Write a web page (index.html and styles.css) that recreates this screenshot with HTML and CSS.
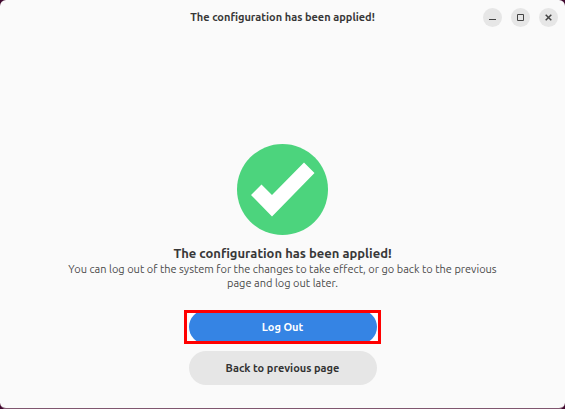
FILE: index.html
```html
<!DOCTYPE html>
<html lang="en">
<head>
    <meta charset="UTF-8">
    <meta name="viewport" content="width=device-width, initial-scale=1.0">
    <title>The configuration has been applied!</title>
    <link rel="stylesheet" href="styles.css">
</head>
<body>
    <div class="window">
        <header class="titlebar">
            <span class="title">The configuration has been applied!</span>
            <div class="controls">
                <button class="control" type="button" aria-label="Minimize">
                    <svg width="19" height="19" viewBox="0 0 19 19"><path d="M6 11.5h7" /></svg>
                </button>
                <button class="control" type="button" aria-label="Maximize">
                    <svg width="19" height="19" viewBox="0 0 19 19"><path d="M6.5 6.5h6v6h-6z" /></svg>
                </button>
                <button class="control" type="button" aria-label="Close">
                    <svg width="19" height="19" viewBox="0 0 19 19"><path class="cross" d="M6.7 6.7l5.6 5.6M12.3 6.7l-5.6 5.6" /></svg>
                </button>
            </div>
        </header>

        <main class="status">
            <svg class="check" viewBox="0 0 91 91" aria-hidden="true">
                <circle cx="45.5" cy="45.5" r="45.5" fill="#4cd47d" />
                <path d="M14 51L24.5 40.500L35 51L67 18.500L77.500 29L35 72.500Z" fill="#fff" />
            </svg>
            <h1 class="heading">The configuration has been applied!</h1>
            <p class="description">You can log out of the system for the changes to take effect, or go back to the previous page and log out later.</p>
            <div class="actions">
                <div class="highlight">
                    <button class="button primary" type="button">Log Out</button>
                </div>
                <button class="button" type="button">Back to previous page</button>
            </div>
        </main>
    </div>
</body>
</html>
```

FILE: styles.css
```css
* {
    box-sizing: border-box;
}

body {
    margin: 0;
    background-color: #40082e;
    color: #383838;
    font-family: Ubuntu, "Noto Sans", sans-serif;
    font-size: 11px;
}

.window {
    display: flex;
    flex-direction: column;
    min-height: 100vh;
    background-color: #fafafa;
    border-bottom: 1px solid #80566f;
    border-radius: 6px;
}

.titlebar {
    display: grid;
    grid-template-columns: 1fr auto 1fr;
    align-items: center;
    height: 34px;
    padding: 0 7px;
}

.title {
    grid-column: 2;
    font-weight: 700;
}

.controls {
    display: flex;
    justify-content: flex-end;
    gap: 9px;
}

.control {
    display: flex;
    padding: 0;
    border: none;
    border-radius: 50%;
    background-color: #e6e6e6;
}

.control path {
    fill: none;
    stroke: #444;
}

.control .cross {
    stroke-width: 1.5;
}

.status {
    display: flex;
    flex-direction: column;
    align-items: center;
    padding: 110px 60px 23px;
    text-align: center;
}

.check {
    width: 91px;
    height: 91px;
}

.heading {
    margin: 9px 0 0;
    font-size: 13px;
    font-weight: 700;
    line-height: 18px;
}

.description {
    max-width: 440px;
    margin: 0;
    color: #4a4a4a;
    line-height: 14px;
}

.actions {
    display: flex;
    flex-direction: column;
    gap: 7px;
    width: 188px;
    margin-top: 20px;
}

.button {
    width: 100%;
    height: 34px;
    padding: 0;
    border: none;
    border-radius: 17px;
    background-color: #e6e6e6;
    color: #333;
    font-family: inherit;
    font-size: 11px;
    font-weight: 700;
}

.primary {
    display: block;
    background-color: #3584e4;
    color: #fff;
}

.highlight {
    position: relative;
    background-color: #fff;
}

.highlight::after {
    content: "";
    position: absolute;
    inset: 0 -4px 0 -5px;
    border: 3px solid #f00;
    pointer-events: none;
}
```
